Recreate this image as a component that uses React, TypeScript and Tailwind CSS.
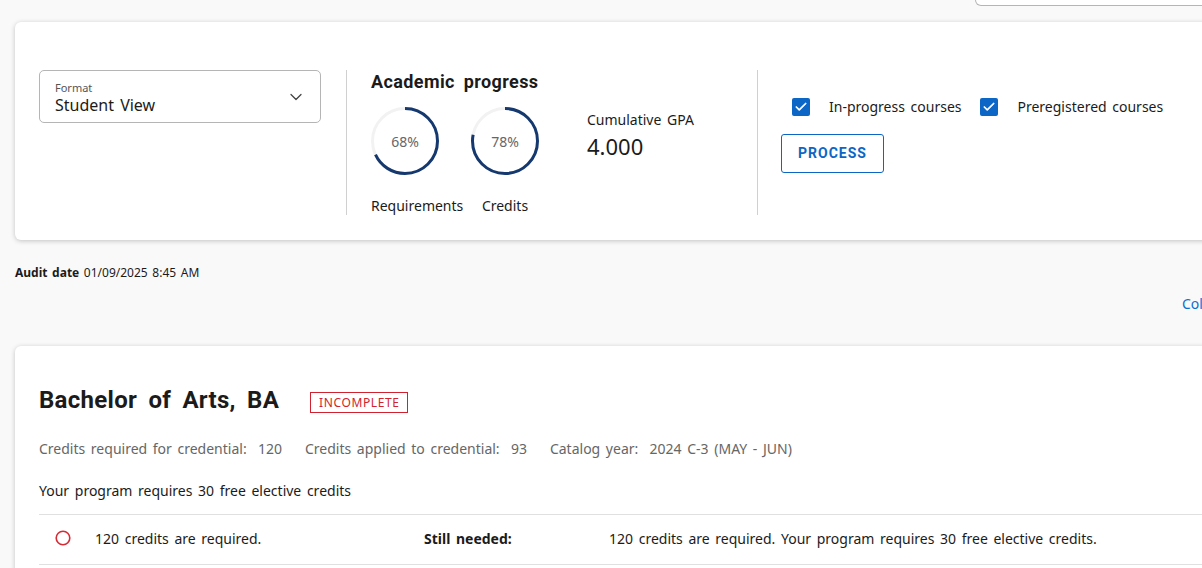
import React from 'react';
import { ChevronDown, Check } from 'lucide-react';

const body = { fontFamily: '"Noto Sans", "Open Sans", sans-serif' };
const head = { fontFamily: 'Roboto, "Noto Sans", sans-serif' };

const Ring = ({ pct }: { pct: number }) => {
  const r = 32.5;
  const c = 2 * Math.PI * r;
  return (
    <div className="relative w-[68px] h-[68px]">
      <svg width="68" height="68" viewBox="0 0 68 68" className="-rotate-90">
        <circle cx="34" cy="34" r={r} fill="none" stroke="#f2f2f2" strokeWidth="3" />
        <circle
          cx="34"
          cy="34"
          r={r}
          fill="none"
          stroke="#15396f"
          strokeWidth="3"
          strokeDasharray={`${(c * pct) / 100} ${c}`}
        />
      </svg>
      <div className="absolute inset-0 flex items-center justify-center text-[14px] text-[#666]">{pct}%</div>
    </div>
  );
};

const Box = ({ label }: { label: string }) => (
  <label className="flex items-center gap-[19px]">
    <span className="w-[18px] h-[18px] rounded-[2px] bg-[#0b66c6] flex items-center justify-center">
      <Check size={14} strokeWidth={3} className="text-white" />
    </span>
    <span className="text-[14px] text-[#1b1b1b] [word-spacing:2px]">{label}</span>
  </label>
);

const App: React.FC = () => {
  return (
    <div className="w-[1202px] h-[568px] overflow-hidden bg-[#f9f9f9]" style={body}>
      <div className="w-[1272px] px-[15px]">
        <div className="flex justify-end">
          <div className="w-[282px] h-[6px] bg-white border border-t-0 border-[#b5b5b5] rounded-b-[6px]"></div>
        </div>

        {/* options card */}
        <div className="mt-[16px] bg-white rounded-[6px] shadow-[0_1px_5px_rgba(0,0,0,0.22)] pl-[24px] pt-[48px] pb-[25px] flex">
          <div className="w-[282px] h-[53px] border border-[#b5b5b5] rounded-[5px] pl-[15px] pr-[14px] flex items-center justify-between">
            <div className="flex flex-col pt-[3px]">
              <span className="text-[11px] leading-[14px] text-[#555]">Format</span>
              <span className="text-[16px] leading-[21px] text-[#1b1b1b] [word-spacing:2px]">Student View</span>
            </div>
            <ChevronDown size={20} strokeWidth={1.5} className="text-[#444]" />
          </div>

          <div className="ml-[25px] w-px h-[145px] bg-[#d0d0d0]"></div>

          <div className="w-[410px] pl-[24px]">
            <h2
              className="text-[18px] leading-[24px] font-bold text-[#1b1b1b] tracking-[0.4px] [word-spacing:4px]"
              style={head}
            >
              Academic progress
            </h2>
            <div className="flex mt-[13px]">
              <div className="grid grid-cols-[92px_68px] gap-x-[8px]">
                <Ring pct={68} />
                <Ring pct={78} />
                <div className="mt-[22px] text-[14px] leading-[18px] text-[#1b1b1b]">Requirements</div>
                <div className="mt-[22px] text-[14px] leading-[18px] text-[#1b1b1b] text-center">Credits</div>
              </div>
              <div className="ml-[48px] mt-[3px]">
                <div className="text-[14px] leading-[20px] text-[#1b1b1b] [word-spacing:2px]">Cumulative GPA</div>
                <div className="mt-[1px] text-[22px] leading-[30px] text-[#1b1b1b]">4.000</div>
              </div>
            </div>
          </div>

          <div className="w-px h-[145px] bg-[#d0d0d0]"></div>

          <div className="pl-[23px] pt-[26px]">
            <div className="flex items-center gap-[19px] pl-[11px]">
              <Box label="In-progress courses" />
              <Box label="Preregistered courses" />
            </div>
            <button
              className="mt-[17px] w-[103px] h-[39px] border border-[#0b66c6] rounded-[3px] text-[#0b66c6] text-[14px] font-bold tracking-[1px]"
              style={head}
            >
              PROCESS
            </button>
          </div>
        </div>

        <div className="mt-[25px] text-[12px] leading-[16px] text-[#1b1b1b] [word-spacing:1.5px]">
          <span className="font-bold">Audit date</span> 01/09/2025 8:45 AM
        </div>

        <div className="mt-[13px] flex justify-end">
          <span className="text-[14px] leading-[20px] text-[#0b6fd0] w-[75px]">Collapse all</span>
        </div>

        {/* credential card */}
        <div className="mt-[32px] bg-white rounded-t-[6px] shadow-[0_1px_5px_rgba(0,0,0,0.22)] pl-[24px] pt-[38px] pb-[20px]">
          <div className="flex items-center">
            <h1
              className="text-[24px] leading-[32px] font-bold text-[#1b1b1b] tracking-[0.3px] [word-spacing:5px]"
              style={head}
            >
              Bachelor of Arts, BA
            </h1>
            <span className="ml-[31px] mt-[4px] h-[21px] px-[8px] border border-[#d1232f] text-[#d1232f] text-[12px] leading-[19px] tracking-[0.6px]">
              INCOMPLETE
            </span>
          </div>
          <div className="mt-[23px] flex gap-[23px] text-[14px] leading-[20px] text-[#666] [word-spacing:2px]">
            <span>Credits required for credential:&nbsp; 120</span>
            <span>Credits applied to credential:&nbsp; 93</span>
            <span>Catalog year:&nbsp; 2024 C-3 (MAY - JUN)</span>
          </div>
          <div className="mt-[22px] text-[14px] leading-[20px] text-[#1b1b1b] [word-spacing:2px]">
            Your program requires 30 free elective credits
          </div>
          <div className="mt-[13px] border-t border-b border-[#e0e0e0] h-[51px] pb-[3px] flex items-center text-[14px] text-[#1b1b1b] [word-spacing:2px]">
            <div className="w-[56px] pl-[16px] flex items-center">
              <svg width="16" height="16" viewBox="0 0 16 16">
                <circle cx="8" cy="8" r="6.8" fill="none" stroke="#d62c36" strokeWidth="1.6" />
              </svg>
            </div>
            <div className="w-[329px]">120 credits are required.</div>
            <div className="w-[185px] font-bold">Still needed:</div>
            <div>120 credits are required. Your program requires 30 free elective credits.</div>
          </div>
        </div>
      </div>
    </div>
  );
};

export default App;
